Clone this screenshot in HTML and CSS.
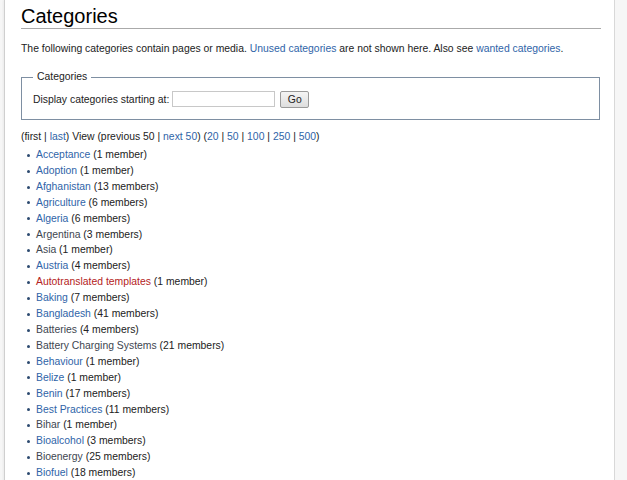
FILE: index.html
```html
<!DOCTYPE html>
<html lang="en">
<head>
    <meta charset="UTF-8">
    <title>Categories</title>
    <link rel="stylesheet" href="styles.css">
</head>
<body>
    <div class="page">
        <h1 class="page-title">Categories</h1>

        <p class="intro">The following categories contain pages or media. <a href="#">Unused categories</a> are not shown here. Also see <a href="#">wanted categories</a>.</p>

        <fieldset class="search-box">
            <legend>Categories</legend>
            <form class="search-form">
                <label for="from">Display categories starting at:</label>
                <input type="text" id="from" class="search-input">
                <button type="submit" class="go-btn">Go</button>
            </form>
        </fieldset>

        <div class="pager">(first | <a href="#">last</a>) View (previous 50 | <a href="#">next 50</a>) (<a href="#">20</a> | <a href="#">50</a> | <a href="#">100</a> | <a href="#">250</a> | <a href="#">500</a>)</div>

        <ul class="cat-list">
            <li><a href="#">Acceptance</a> (1 member)</li>
            <li><a href="#">Adoption</a> (1 member)</li>
            <li><a href="#">Afghanistan</a> (13 members)</li>
            <li><a href="#">Agriculture</a> (6 members)</li>
            <li><a href="#">Algeria</a> (6 members)</li>
            <li><a href="#" class="visited">Argentina</a> (3 members)</li>
            <li><a href="#" class="visited">Asia</a> (1 member)</li>
            <li><a href="#">Austria</a> (4 members)</li>
            <li><a href="#" class="new">Autotranslated templates</a> (1 member)</li>
            <li><a href="#">Baking</a> (7 members)</li>
            <li><a href="#">Bangladesh</a> (41 members)</li>
            <li><a href="#" class="visited">Batteries</a> (4 members)</li>
            <li><a href="#" class="visited">Battery Charging Systems</a> (21 members)</li>
            <li><a href="#">Behaviour</a> (1 member)</li>
            <li><a href="#">Belize</a> (1 member)</li>
            <li><a href="#">Benin</a> (17 members)</li>
            <li><a href="#">Best Practices</a> (11 members)</li>
            <li><a href="#" class="visited">Bihar</a> (1 member)</li>
            <li><a href="#">Bioalcohol</a> (3 members)</li>
            <li><a href="#" class="visited">Bioenergy</a> (25 members)</li>
            <li><a href="#">Biofuel</a> (18 members)</li>
        </ul>
    </div>
</body>
</html>
```

FILE: styles.css
```css
html, body {
    margin: 0;
    padding: 0;
    height: 100%;
}
body {
    font-family: "Liberation Sans", Arial, sans-serif;
    background-color: #f6f6f6;
    color: #222;
    overflow: hidden;
}
a {
    color: #2f64a8;
    text-decoration: none;
}
a.visited {
    color: #3e4650;
}
a.new {
    color: #b42222;
}
.page {
    margin-left: 4px;
    width: 580px;
    min-height: 100%;
    padding: 4px 13px 0 16px;
    background-color: white;
    border-left: 1px solid #cfcfcf;
    border-right: 1px solid #d8d8d8;
    box-shadow: -1px 0 2px rgba(0,0,0,0.05);
    font-size: 10.4px;
}
.page-title {
    font-size: 20px;
    font-weight: normal;
    line-height: 24px;
    margin: 0;
    padding-bottom: 0;
    border-bottom: 1px solid #aaa;
    color: #000;
}
.intro {
    margin: 12px 0 0 0;
    line-height: 16px;
}
.search-box {
    margin: 13px 1px 0 0;
    padding: 0 11px 5px 11px;
    border: 1px solid #7e8fa2;
    min-inline-size: 0;
}
.search-box legend {
    padding: 0 4px;
    margin-left: 0;
    line-height: 14px;
}
.search-form {
    display: flex;
    align-items: center;
    height: 30px;
}
.search-form label {
    margin-right: 3px;
}
.search-input {
    width: 99px;
    height: 12px;
    padding: 1px;
    border: 1px solid #c8c8c8;
    font-size: 10.4px;
    font-family: inherit;
}
.go-btn {
    margin-left: 5px;
    width: 29px;
    height: 17px;
    padding: 0;
    font-family: inherit;
    font-size: 10.4px;
    color: #222;
    background: linear-gradient(#f4f4f4, #dedede);
    border: 1px solid #9a9a9a;
    border-radius: 2px;
}
.pager {
    margin-top: 9px;
    line-height: 16px;
}
.cat-list {
    list-style: none;
    margin: 2px 0 0 0;
    padding: 0 0 0 6px;
    line-height: 15.9px;
}
.cat-list li::before {
    content: "";
    display: inline-block;
    width: 3px;
    height: 3px;
    border-radius: 50%;
    background-color: #2c4a70;
    vertical-align: middle;
    margin-right: 6px;
}
```
